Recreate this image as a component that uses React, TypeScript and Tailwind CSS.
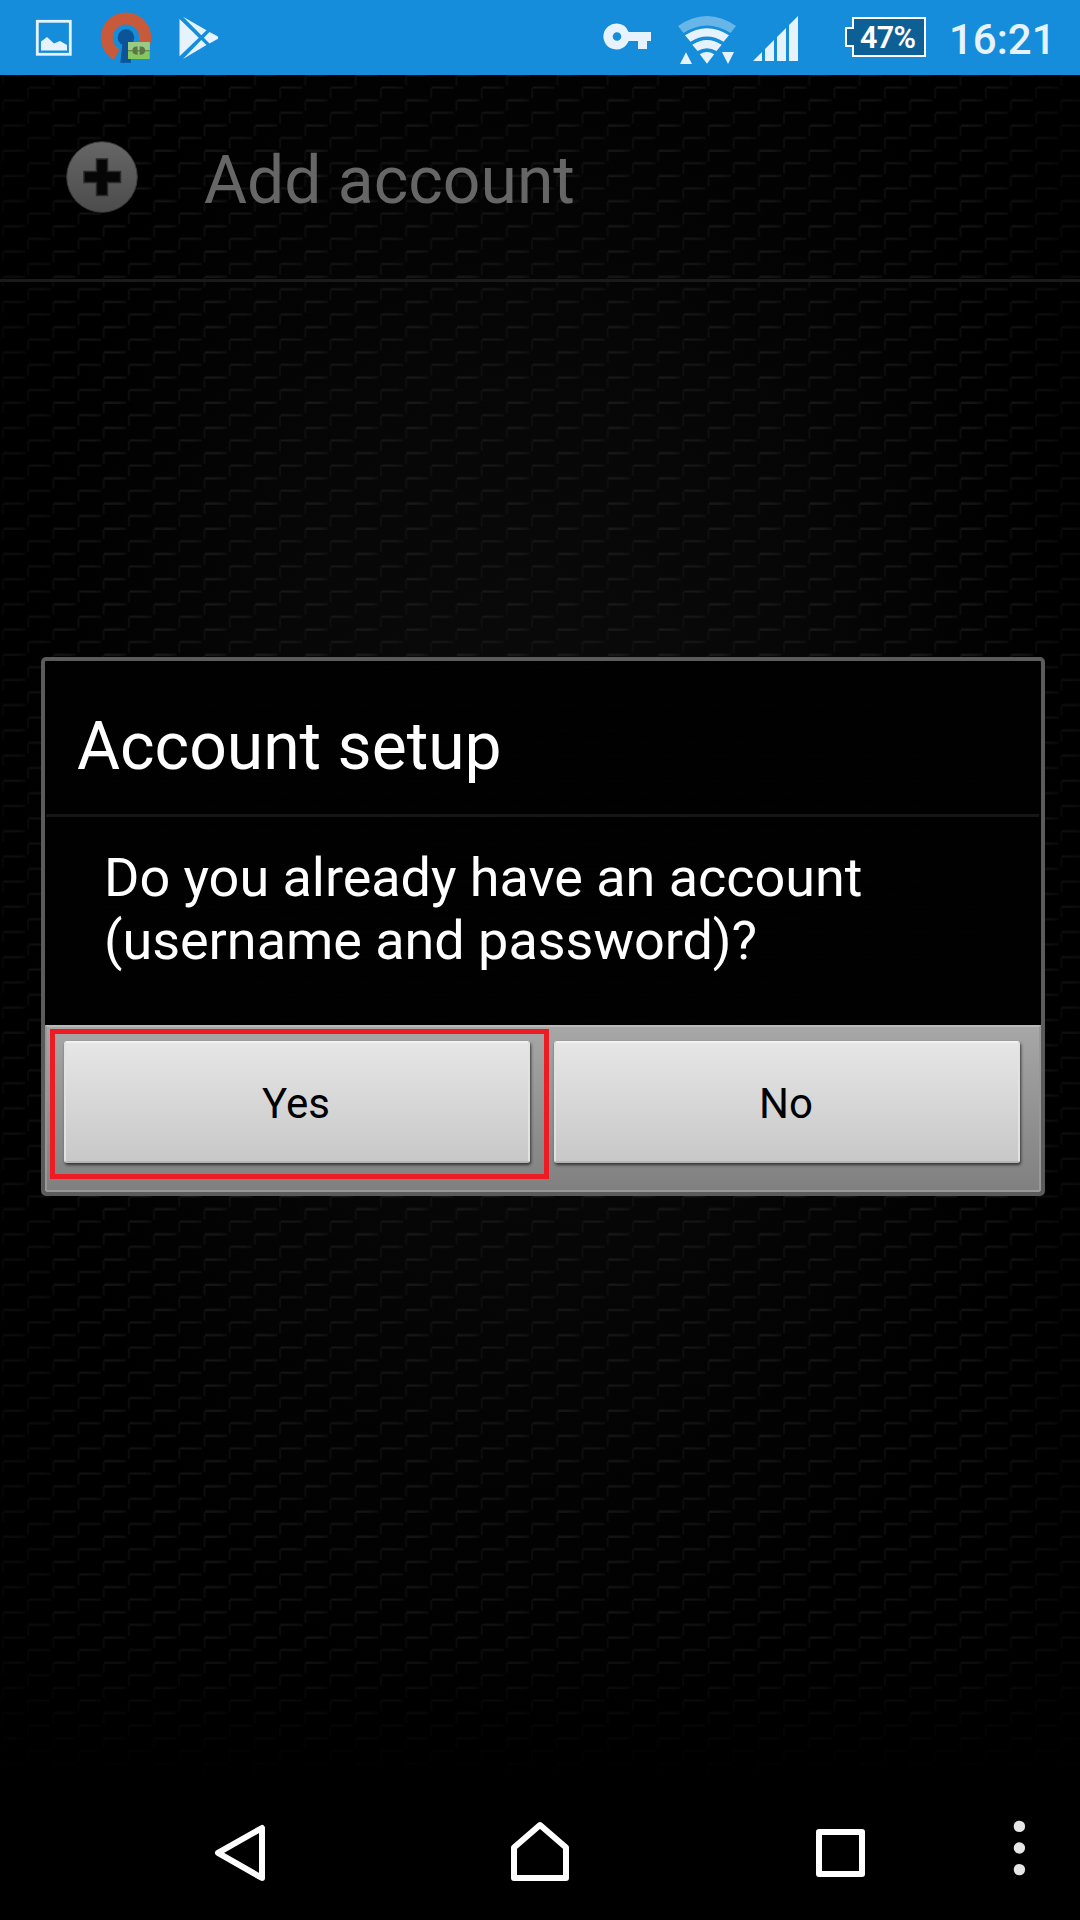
import React from "react";

function Texture() {
  return (
    <svg className="absolute inset-0 h-full w-full" aria-hidden="true">
      <defs>
        <linearGradient id="thread" gradientUnits="userSpaceOnUse" spreadMethod="repeat" x1="2" x2="27.2" y1="0" y2="0">
          <stop offset="0" stopColor="#1b1b1b" />
          <stop offset="0.6" stopColor="#181818" />
          <stop offset="1" stopColor="#0c0c0c" />
        </linearGradient>
        <pattern id="weave" width="50.4" height="25.2" patternUnits="userSpaceOnUse" patternTransform="translate(0.4 -2.1)">
          <g fill="none" strokeWidth="2">
            <path d="M3 1L20 1.1L26 1.6L20 3L3 3Z" fill="url(#thread)" stroke="none" />
            <path d="M3 1.5L25 1.6" stroke="url(#thread)" />
            <path d="M28.2 14.1L50.2 14.2" stroke="url(#thread)" />
            <path d="M2.5 2V12M27.7 14.6V24.6" stroke="#101010" />
          </g>
        </pattern>
        <radialGradient id="glow" cx="50%" cy="42%" r="48%">
          <stop offset="0" stopColor="#0b0b0b" />
          <stop offset="0.5" stopColor="#070707" />
          <stop offset="1" stopColor="#000" />
        </radialGradient>
        <linearGradient id="side" x1="0" x2="1" y1="0" y2="0">
          <stop offset="0" stopColor="#000" stopOpacity="0.55" />
          <stop offset="0.08" stopColor="#000" stopOpacity="0.15" />
          <stop offset="0.25" stopColor="#000" stopOpacity="0" />
          <stop offset="0.75" stopColor="#000" stopOpacity="0" />
          <stop offset="0.92" stopColor="#000" stopOpacity="0.15" />
          <stop offset="1" stopColor="#000" stopOpacity="0.55" />
        </linearGradient>
        <linearGradient id="foot" x1="0" x2="0" y1="0" y2="1">
          <stop offset="0" stopColor="#000" stopOpacity="0.3" />
          <stop offset="0.2" stopColor="#000" stopOpacity="0.1" />
          <stop offset="0.5" stopColor="#000" stopOpacity="0" />
          <stop offset="0.85" stopColor="#000" stopOpacity="0.3" />
          <stop offset="0.927" stopColor="#000" stopOpacity="1" />
          <stop offset="1" stopColor="#000" stopOpacity="1" />
        </linearGradient>
      </defs>
      <rect width="100%" height="100%" fill="url(#glow)" />
      <rect width="100%" height="100%" fill="url(#weave)" />
      <rect width="100%" height="100%" fill="url(#side)" />
      <rect width="100%" height="100%" fill="url(#foot)" />
    </svg>
  );
}

function StatusBar() {
  return (
    <header className="relative flex h-[75px] items-start bg-[#158ddb]">
      <svg className="h-[75px] w-[230px]" viewBox="0 0 230 75">
        <rect x="37.3" y="21.3" width="33" height="33" fill="none" stroke="#e6f3fc" strokeWidth="2.8" />
        <path d="M41 50.5V41.5L47 37L54 43.5L60 41L67 45V50.5Z" fill="#e6f3fc" />
        <path d="M116.8 54.5A19.2 19.2 0 1 1 135.2 54.5" fill="none" stroke="#c75a3a" strokeWidth="12" />
        <circle cx="126" cy="37.5" r="8.3" fill="#0d5398" />
        <path d="M122.5 43H129.5L131 62.7H120.3Z" fill="#0d5398" />
        <rect x="128" y="42" width="21.7" height="17" fill="#85c95e" />
        <rect x="128" y="42" width="21.7" height="8.5" fill="#9acb84" />
        <path d="M128 50.7H149.7" stroke="#66804b" strokeWidth="1.2" />
        <path d="M137.6 46.5H136.5A4 4 0 0 0 136.5 54.7H137.6ZM139.6 46.5H141A4 4 0 0 1 141 54.7H139.6Z" fill="#5d7648" />
        <g fill="#e6f3fc">
          <path d="M179.5 19L198.8 37.7L179.5 56.3Z" />
          <path d="M183 16.8L206.5 30.2L201.3 35.3Z" />
          <path d="M183 59L206.5 45L201.3 40Z" />
          <path d="M203.8 37.7L209.5 32L217.6 36.3Q219 37.7 217.6 39L209.5 43.4Z" />
        </g>
      </svg>
      <svg className="ml-[360px] h-[75px] w-[345px]" viewBox="590 0 345 75">
        <g fill="#e6f3fc">
          <path fillRule="evenodd" d="M617 23.5A13 13 0 1 0 628.6 41H638V49H647V41H651V32H628.6A13 13 0 0 0 617 23.5ZM617 32.2A4.3 4.3 0 1 1 617 40.8A4.3 4.3 0 1 1 617 32.2Z" />
          <path d="M678 26Q707 6 736 26L730.5 33Q707 18 683.5 33Z" opacity="0.4" />
          <path d="M685 35.3Q707 21 729 35.3L723.5 41.8Q707 31 690.5 41.8Z" />
          <path d="M692.3 44.7Q707 35.3 721.7 44.7L716.5 51Q707 45.5 697.5 51Z" />
          <path d="M699.8 54.3Q707 49.7 714.2 54.3L707 63.8Z" />
          <path d="M680 64L686 52.2L692 64ZM722 52H734L728 64Z" />
          <path d="M753 61L762 52V61ZM765 49L774 40V61H765ZM777 37L786 28V61H777ZM789 25L798 16V61H789Z" />
        </g>
        <path d="M853 18H925V56H853V46H846V28H853Z" fill="#0d6095" stroke="#fff" strokeWidth="2" />
        <text x="860" y="48" fill="#fff" fontFamily="Roboto" fontSize="30.5" fontWeight="600" textLength="56">47%</text>
      </svg>
      <span className="ml-[14px] mt-[15px] font-['Roboto',sans-serif] text-[42px] font-medium leading-[49px] text-[#e6f3fc]">16:21</span>
    </header>
  );
}

const buttonClass =
  "h-[122px] w-[466px] rounded-[3px] border-2 border-t-[#f1f1f1] border-x-[#e2e2e2] border-b-[#b5b5b5] bg-linear-to-b from-[#e6e6e6] to-[#c8c8c8] pr-[2px] pt-[2px] text-[42px] leading-[49px] text-black shadow-[1px_2px_3px_0px_#333333]";

function SetupDialog() {
  return (
    <section className="relative mx-auto mt-[375px] flex h-[539px] w-[1004px] translate-x-[3px] flex-col rounded-[5px] border-4 border-[#5b5b5b] bg-[#010101]/95 text-white">
      <h2 className="h-[153px] pl-[32px] pt-[47px] text-[66px] leading-[77px]">Account setup</h2>
      <div className="ml-px mr-[2px] h-[3px] shrink-0 bg-[#161616]" />
      <p className="h-[208px] pl-[59px] pt-[29px] text-[54px] leading-[63px] tracking-[-0.04px]">
        Do you already have an account
        <br />
        (username and password)?
      </p>
      <div className="relative flex h-[167px] shrink-0 gap-[24px] rounded-b-[2px] border-2 border-t-[#bdb8ba] border-x-[#989898] border-b-[#989898] bg-linear-to-b from-[#a7a7a7] to-[#808080] pl-[17px] pt-[14px]">
        <button className={buttonClass}>Yes</button>
        <button className={buttonClass}>No</button>
        <div className="absolute left-[3px] top-[2px] h-[150px] w-[499px] border-[5px] border-[#ed1c24]" />
      </div>
    </section>
  );
}

function NavBar() {
  return (
    <nav className="relative mt-auto h-[140px] w-full">
      <svg className="h-[140px] w-[1080px]" viewBox="0 1780 1080 140">
        <g fill="none" stroke="#fff" strokeWidth="6" strokeLinejoin="round">
          <path d="M218 1852.8L262 1828V1878Z" />
          <path d="M514 1878V1847.5L540 1825L566 1847.5V1878Z" />
          <rect x="819" y="1832" width="43" height="42" />
        </g>
        <g fill="#e6e6e6">
          <circle cx="1019.4" cy="1826.4" r="5.7" />
          <circle cx="1019.4" cy="1848" r="5.7" />
          <circle cx="1019.4" cy="1869.6" r="5.7" />
        </g>
      </svg>
    </nav>
  );
}

export default function App() {
  return (
    <main className="relative flex h-[1920px] w-[1080px] flex-col overflow-hidden bg-black font-['Roboto',sans-serif]">
      <Texture />
      <StatusBar />
      <div className="relative flex h-[207px] items-start border-b-[3px] border-[#1a1a1a] pl-[66px] pt-[66px]">
        <svg className="h-[72px] w-[72px]" viewBox="66 141 72 72">
          <defs>
            <linearGradient id="disc" x1="0" x2="0" y1="0" y2="1">
              <stop offset="0" stopColor="#666" />
              <stop offset="1" stopColor="#4c4c4c" />
            </linearGradient>
          </defs>
          <circle cx="102" cy="177" r="35.3" fill="url(#disc)" stroke="#3a3a3a" strokeWidth="1" />
          <path d="M96.5 159H107.5V171.5H120.5V182.5H107.5V195.5H96.5V182.5H84V171.5H96.5Z" fill="#060606" stroke="#292929" strokeWidth="1.5" />
        </svg>
        <span className="ml-[66px] mt-[1px] text-[66px] leading-[77px] text-[#666]">Add account</span>
      </div>
      <SetupDialog />
      <NavBar />
    </main>
  );
}
